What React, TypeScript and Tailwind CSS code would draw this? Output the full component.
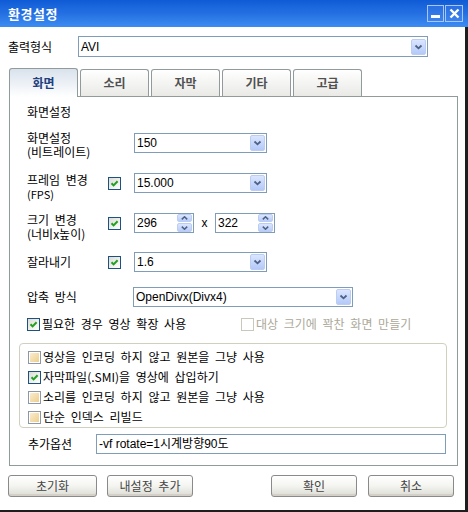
import React from "react";

const KR = "font-['Noto_Sans_CJK_KR',sans-serif]";
const LT = "font-['Liberation_Sans','Noto_Sans_CJK_KR',sans-serif]";

function Chevron() {
  return (
    <svg width="9" height="6" viewBox="0 0 9 6">
      <path d="M1.5 1.5 L4.5 4.3 L7.5 1.5" fill="none" stroke="#4d6185" strokeWidth="1.8" />
    </svg>
  );
}

function ArrowBtn() {
  return (
    <div className="w-[15px] h-[16px] mr-[1px] flex items-center justify-center rounded-[2px] border border-[#bccdf3] bg-gradient-to-b from-[#dbe6fe] to-[#b4c9f8]">
      <Chevron />
    </div>
  );
}

function Select({ w, value }: { w: string; value: string }) {
  return (
    <div className={`${w} h-[20px] flex items-center border border-[#7f9db9] bg-white`}>
      <span className={`flex-1 pl-[2px] text-[12px] leading-[14px] text-black ${LT}`}>{value}</span>
      <ArrowBtn />
    </div>
  );
}

function Spin({ value }: { value: string }) {
  return (
    <div className="w-[60px] h-[20px] flex items-center border border-[#7f9db9] bg-white">
      <span className={`flex-1 pl-[2px] text-[12px] leading-[14px] text-black ${LT}`}>{value}</span>
      <div className="w-[15px] h-[18px] mr-[1px] flex flex-col gap-[1px]">
        <div className="h-[8px] flex items-center justify-center rounded-[2px] border border-[#bccdf3] bg-gradient-to-b from-[#dbe6fe] to-[#b8ccf8]">
          <svg width="7" height="4" viewBox="0 0 7 4">
            <path d="M0.8 3.4 L3.5 0.8 L6.2 3.4" fill="none" stroke="#4d6185" strokeWidth="1.5" />
          </svg>
        </div>
        <div className="h-[9px] flex items-center justify-center rounded-[2px] border border-[#bccdf3] bg-gradient-to-b from-[#dbe6fe] to-[#b8ccf8]">
          <svg width="7" height="4" viewBox="0 0 7 4">
            <path d="M0.8 0.6 L3.5 3.2 L6.2 0.6" fill="none" stroke="#4d6185" strokeWidth="1.5" />
          </svg>
        </div>
      </div>
    </div>
  );
}

function Check({ state }: { state: "checked" | "tan" | "disabled" }) {
  if (state === "disabled") {
    return <div className="w-[13px] h-[13px] shrink-0 border border-[#cac8bb] bg-white" />;
  }
  if (state === "tan") {
    return (
      <div className="w-[13px] h-[13px] shrink-0 border border-[#8d98a4] bg-white p-[1px]">
        <div className="w-full h-full bg-gradient-to-br from-[#fbeccb] to-[#eccf8e]" />
      </div>
    );
  }
  return (
    <div className="w-[13px] h-[13px] shrink-0 border border-[#1c5180] bg-gradient-to-br from-[#dcdcd6] to-[#ffffff] flex items-center justify-center">
      <svg width="9" height="9" viewBox="0 0 9 9">
        <path d="M1.5 4.2 L3.6 6.4 L7.6 2.2" fill="none" stroke="#21a121" strokeWidth="2" />
      </svg>
    </div>
  );
}

function XPButton({ w, label }: { w: string; label: string }) {
  return (
    <div
      className={`${w} h-[22px] flex items-center justify-center rounded-[3px] border border-[#8a8a8a] bg-gradient-to-b from-[#ffffff] via-[#f4f4f0] to-[#dcdcd6] shadow-[inset_0_-2px_0_#d4d0c8] text-[12px] text-[#444] ${KR}`}
    >
      {label}
    </div>
  );
}

function Tab({ label, active }: { label: string; active?: boolean }) {
  if (active) {
    return (
      <div className="w-[69px] h-[29px] -mb-px flex items-center justify-center rounded-t-[3px] border border-b-0 border-[#919b9c] bg-gradient-to-b from-[#d9e2ec] to-[#ffffff] relative z-10">
        <span className={`text-[12px] font-bold text-[#21407e] ${KR}`}>{label}</span>
      </div>
    );
  }
  return (
    <div className="w-[69px] h-[27px] flex items-center justify-center rounded-t-[3px] border border-b-0 border-[#919b9c] bg-gradient-to-b from-[#ffffff] to-[#e9e9e6]">
      <span className={`text-[12px] font-bold text-[#505050] ${KR}`}>{label}</span>
    </div>
  );
}

function Label({ children }: { children: React.ReactNode }) {
  return <div className={`w-[81px] ml-[8px] text-[12px] leading-[14px] text-black ${KR}`}>{children}</div>;
}

export default function App() {
  return (
    <div className={`w-[468px] h-[512px] bg-white flex flex-col [word-spacing:3px] ${KR}`}>
      {/* Title bar */}
      <div className="h-[27px] shrink-0 flex items-center bg-gradient-to-b from-[#0f5bd6] via-[#2470e2] to-[#3d8cf2]">
        <span className="ml-[8px] text-[13px] font-bold text-white tracking-[0.5px]">환경설정</span>
        <div className="ml-auto mr-[5px] flex gap-[1px]">
          <div className="w-[17px] h-[17px] border border-[#a9c6f7] bg-gradient-to-b from-[#2a6ee0] to-[#3b84ee] flex items-end justify-center pb-[3px]">
            <div className="w-[9px] h-[3px] bg-white" />
          </div>
          <div className="w-[18px] h-[17px] border border-[#a9c6f7] bg-gradient-to-b from-[#2a6ee0] to-[#3b84ee] flex items-center justify-center">
            <svg width="11" height="11" viewBox="0 0 11 11">
              <path d="M1.5 1.5 L9.5 9.5 M9.5 1.5 L1.5 9.5" stroke="white" strokeWidth="2.4" />
            </svg>
          </div>
        </div>
      </div>

      {/* Body */}
      <div className="flex-1 flex flex-col border-r-[3px] border-b-[2px] border-[#1e1e1e]">
        {/* Output format */}
        <div className="mt-[9px] flex items-center h-[21px]">
          <span className="ml-[8px] w-[70px] text-[12px] text-black">출력형식</span>
          <Select w="w-[350px] h-[21px]" value="AVI" />
        </div>

        {/* Tabs */}
        <div className="mt-[11px] ml-[9px] flex items-end gap-[2px] h-[28px]">
          <Tab label="화면" active />
          <Tab label="소리" />
          <Tab label="자막" />
          <Tab label="기타" />
          <Tab label="고급" />
        </div>

        {/* Panel */}
        <div className="ml-[9px] w-[449px] h-[370px] border border-[#919b9c] bg-white flex flex-col pl-[9px]">
          <div className="h-[30px] flex items-center">
            <span className="ml-[8px] text-[12px] text-black">화면설정</span>
          </div>

          <div className="mt-[6px] h-[20px] flex items-center">
            <Label>
              <div className="pt-[4px]">화면설정</div>
              <div>(비트레이트)</div>
            </Label>
            <div className="w-[26px]" />
            <Select w="w-[133px]" value="150" />
          </div>

          <div className="mt-[20px] h-[20px] flex items-center">
            <Label>
              <div className="pt-[8px]">프레임 변경</div>
              <div className="text-[11px] leading-[14px]">(FPS)</div>
            </Label>
            <div className="w-[26px] flex">
              <Check state="checked" />
            </div>
            <Select w="w-[133px]" value="15.000" />
          </div>

          <div className="mt-[20px] h-[20px] flex items-center">
            <Label>
              <div className="pt-[8px]">크기 변경</div>
              <div>(너비x높이)</div>
            </Label>
            <div className="w-[26px] flex">
              <Check state="checked" />
            </div>
            <Spin value="296" />
            <span className={`w-[21px] text-center text-[12px] text-black ${LT}`}>x</span>
            <Spin value="322" />
          </div>

          <div className="mt-[19px] h-[20px] flex items-center">
            <Label>잘라내기</Label>
            <div className="w-[26px] flex">
              <Check state="checked" />
            </div>
            <Select w="w-[133px]" value="1.6" />
          </div>

          <div className="mt-[15px] h-[20px] flex items-center">
            <Label>압축 방식</Label>
            <div className="w-[25px]" />
            <Select w="w-[220px]" value="OpenDivx(Divx4)" />
          </div>

          <div className="mt-[7px] h-[20px] flex items-center">
            <div className="ml-[8px] w-[214px] flex items-center gap-[2px]">
              <Check state="checked" />
              <span className="text-[12px] text-black">필요한 경우 영상 확장 사용</span>
            </div>
            <div className="flex items-center gap-[2px]">
              <Check state="disabled" />
              <span className="text-[12px] text-[#aca899]">대상 크기에 꽉찬 화면 만들기</span>
            </div>
          </div>

          <div className="mt-[9px] w-[428px] h-[85px] rounded-[4px] border border-[#d0d0bf] pt-[3px] pl-[8px] flex flex-col">
            {[
              { s: "tan" as const, t: "영상을 인코딩 하지 않고 원본을 그냥 사용" },
              { s: "checked" as const, t: "자막파일(.SMI)을 영상에 삽입하기" },
              { s: "tan" as const, t: "소리를 인코딩 하지 않고 원본을 그냥 사용" },
              { s: "tan" as const, t: "단순 인덱스 리빌드" },
            ].map((r, i) => (
              <div key={i} className="h-[20px] flex items-center gap-[2px]">
                <Check state={r.s} />
                <span className="text-[12px] text-black">{r.t}</span>
              </div>
            ))}
          </div>

          <div className="mt-[6px] h-[20px] flex items-center">
            <span className="ml-[9px] w-[68px] text-[12px] text-black">추가옵션</span>
            <div className="w-[350px] h-[20px] border border-[#7f9db9] bg-white flex items-center pl-[2px]">
              <span className={`text-[12px] text-black [word-spacing:0px] ${LT}`}>-vf rotate=1시계방향90도</span>
            </div>
          </div>
        </div>

        {/* Buttons */}
        <div className="mt-[9px] flex items-center">
          <div className="ml-[8px]">
            <XPButton w="w-[89px]" label="초기화" />
          </div>
          <div className="ml-[10px]">
            <XPButton w="w-[86px]" label="내설정 추가" />
          </div>
          <div className="ml-[78px]">
            <XPButton w="w-[86px]" label="확인" />
          </div>
          <div className="ml-[11px]">
            <XPButton w="w-[86px]" label="취소" />
          </div>
        </div>
      </div>
    </div>
  );
}
